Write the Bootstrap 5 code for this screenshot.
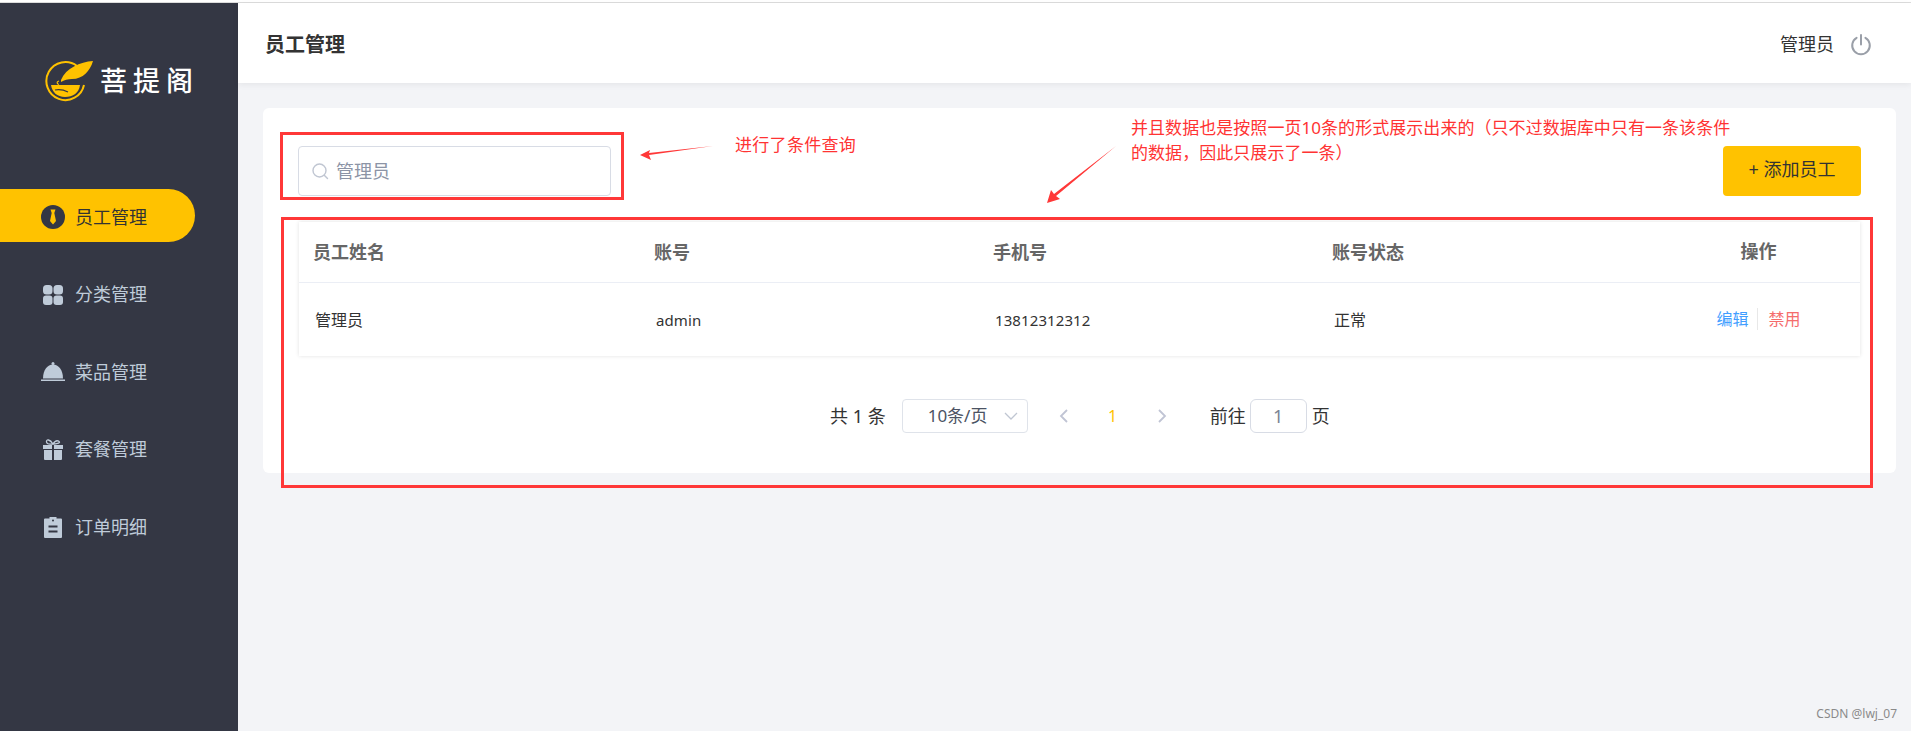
<!DOCTYPE html>
<html lang="zh-CN">
<head>
  <meta charset="UTF-8" />
  <title>员工管理</title>
  <link href="https://cdn.jsdelivr.net/npm/bootstrap@5.3.0/dist/css/bootstrap.min.css" rel="stylesheet" />
  <style>
    html, body { height: 100%; overflow: hidden; }
    body { font-family: "Noto Sans", "Noto Sans CJK SC", sans-serif; font-size: 16px; color: #333; background: #f3f4f7; }
    .page-root { position: relative; height: 731px; width: 1911px; }
    .top-line { height: 3px; background: #fff; border-bottom: 1px solid #dcdcdc; }
    .app-body { height: 728px; }

    .side-bar { width: 238px; background: #343744; color: #bfcbd9; flex-shrink: 0; }
    .logo-box { height: 186px; padding: 57px 0 0 44px; }
    .logo-text { color: #fff; font-size: 27px; font-weight: 500; letter-spacing: 6px; line-height: 42px; margin-left: 6px; }
    .menu-item { height: 53px; width: 195px; margin-bottom: 24.5px; padding: 3px 0 0 41px; font-size: 18px; gap: 10px; }
    .menu-item.is-on { background: #ffc200; color: #333; border-radius: 0 27px 27px 0; }
    .menu-item svg { width: 24px; height: 24px; flex-shrink: 0; }

    .head-bar { height: 80px; background: #fff; padding: 3px 39px 0 27px; box-shadow: 0 2px 6px rgba(0, 0, 0, .06); }
    .head-title { font-size: 20px; font-weight: 700; color: #333; }
    .head-user { font-size: 18px; color: #333; }

    .main-card { margin: 25px 15px 0 25px; height: 365px; background: #fff; border-radius: 6px; padding: 38px 35px 0 35px; }
    .search-wrap { position: relative; width: 313px; }
    .search-wrap svg { position: absolute; left: 13px; top: 16px; width: 18px; height: 18px; }
    .search-input { height: 50px; font-size: 18px; color: #8c94a6; border: 1px solid #d8dce5; border-radius: 4px; padding: 0 0 3px 37px; }
    .add-btn { width: 138px; height: 50px; background: #ffc200; color: #333; border: 0; border-radius: 4px; font-size: 18px; padding: 0 0 4px; }

    .staff-table { margin: 26px 1px 0 1px; width: 1561px; table-layout: fixed; box-shadow: 0 0 4px rgba(0, 0, 0, .12); }
    .staff-table th { height: 60px; padding: 2px 0 0 14px; color: #666; font-size: 18px; font-weight: 700; vertical-align: middle; border-bottom: 1px solid #ebeef5; }
    .staff-table td { height: 74px; padding: 2px 0 0 16px; color: #333; font-size: 16px; vertical-align: middle; border-bottom: 0; }
    .staff-table .num-cell { font-size: 15px; letter-spacing: .1px; }
    .staff-table .op-cell { padding: 0; text-align: center; }
    .op-edit { color: #419eff; padding-right: 8px; border-right: 1px solid #e8e8e8; }
    .op-ban { color: #f56c6c; padding-left: 11px; }

    .pager-row { margin-top: 43px; padding-left: 532px; font-size: 18px; color: #333; height: 34px; }
    .size-box { width: 126px; height: 34px; border: 1px solid #dfe3ea; border-radius: 4px; margin-left: 16px; padding: 0 9px 0 25px; color: #4b5363; font-size: 17px; }
    .pg-arrow { width: 12px; height: 16px; }
    .pg-prev { margin-left: 30px; }
    .pg-now { color: #ffc200; width: 36px; text-align: center; margin: 0 25px; font-size: 16px; }
    .pg-go { margin-left: 42px; }
    .go-box { width: 57px; height: 34px; border: 1px solid #d8dce5; border-radius: 6px; color: #7c8494; margin: 0 5px 0 4px; }

    .mark-layer { position: absolute; left: 0; top: 0; pointer-events: none; }
    .note-text { position: absolute; color: #ff3333; font-size: 17px; line-height: 25px; white-space: nowrap; }
    .note-one { left: 735px; top: 132px; letter-spacing: .3px; }
    .note-two { left: 1131px; top: 115px; letter-spacing: .05px; }
    .water-mark { position: absolute; right: 14px; bottom: 8px; font-size: 12px; color: #8a8a8a; }
  </style>
</head>
<body>
  <div class="page-root">
    <div class="top-line"></div>
    <div class="app-body d-flex">

      <aside class="side-bar">
        <div class="logo-box d-flex align-items-start">
          <svg width="50" height="42" viewBox="0 0 50 42">
            <path d="M33 6A19 19 0 1 0 40 25" fill="none" stroke="#ffc200" stroke-width="2"/>
            <path d="M17 20C22 8 36 2 49 1C46 11 39 19 28 19C24 19 20 20 17 22Z" fill="#ffc200"/>
            <path d="M15 21c-3 1-2 3 0 3.500" fill="none" stroke="#ffc200" stroke-width="1.200"/>
            <path d="M7 25H36C35 33 29 37 21 37C13 37 8 32 7 25Z" fill="#ffc200"/>
            <path d="M11 30c5-1 9 0 13 2" fill="none" stroke="#343744" stroke-width="1.200"/>
          </svg>
          <span class="logo-text">菩提阁</span>
        </div>
        <nav class="d-flex flex-column">
          <div class="menu-item is-on d-flex align-items-center">
            <svg viewBox="0 0 24 24"><circle cx="12" cy="12" r="12" fill="#343744"/><path d="M9.500 4.500h5l-1.200 3.500 1.700 8-3 3.500-3-3.500 1.700-8z" fill="#ffc200"/></svg>
            <span>员工管理</span>
          </div>
          <div class="menu-item d-flex align-items-center">
            <svg viewBox="0 0 24 24" fill="#bfcbd9"><rect x="2" y="2" width="9.500" height="9.500" rx="3.500"/><rect x="12.500" y="2" width="9.500" height="9.500" rx="3.500"/><rect x="2" y="12.500" width="9.500" height="9.500" rx="3"/><rect x="12.500" y="12.500" width="9.500" height="9.500" rx="3"/></svg>
            <span>分类管理</span>
          </div>
          <div class="menu-item d-flex align-items-center">
            <svg viewBox="0 0 24 24" fill="#bfcbd9"><circle cx="12" cy="3.500" r="1.500"/><path d="M2 18.500C2 10 6.500 4.500 12 4.500s10 5.500 10 14z"/><rect y="19.500" width="24" height="1.500"/></svg>
            <span>菜品管理</span>
          </div>
          <div class="menu-item d-flex align-items-center">
            <svg viewBox="0 0 24 24" fill="#bfcbd9"><path d="M2 7h9v4H2zM13 7h9v4h-9zM3 12h8v10H4a1 1 0 0 1-1-1zM13 12h8v9a1 1 0 0 1-1 1h-7z"/><path d="M12 6C9 1 5 1 5.500 4S9 6 12 6c3 0 7-1 6.500-2S15 1 12 6z" fill="none" stroke="#bfcbd9" stroke-width="1.300"/></svg>
            <span>套餐管理</span>
          </div>
          <div class="menu-item d-flex align-items-center">
            <svg viewBox="0 0 24 24"><path d="M4 3.500h4.500V2h7v1.500H20a1 1 0 0 1 1 1V22a1 1 0 0 1-1 1H4a1 1 0 0 1-1-1V4.500a1 1 0 0 1 1-1z" fill="#bfcbd9"/><circle cx="12" cy="5.500" r="1" fill="#343744"/><path d="M7.500 11.500h9M7.500 16.500h9" stroke="#343744" stroke-width="1.800"/></svg>
            <span>订单明细</span>
          </div>
        </nav>
      </aside>

      <div class="flex-grow-1">
        <header class="head-bar d-flex align-items-center justify-content-between">
          <div class="head-title">员工管理</div>
          <div class="d-flex align-items-center gap-3">
            <span class="head-user">管理员</span>
            <svg width="22" height="22" viewBox="0 0 20 20" fill="none" stroke="#9a9fa8" stroke-width="1.800" stroke-linecap="round"><path d="M6 3.500a8 8 0 1 0 8 0"/><path d="M10 1v8.500"/></svg>
          </div>
        </header>

        <section class="main-card">
          <div class="d-flex justify-content-between">
            <div class="search-wrap">
              <svg viewBox="0 0 18 18" fill="none" stroke="#c0c6d2" stroke-width="1.400" stroke-linecap="round"><circle cx="8.500" cy="8.500" r="6.500"/><path d="M13.500 13.500l3 3"/></svg>
              <input class="form-control search-input" type="text" value="管理员" />
            </div>
            <button class="btn add-btn" type="button">+ 添加员工</button>
          </div>

          <table class="table staff-table mb-0">
            <colgroup><col style="width:341px"><col style="width:339px"><col style="width:339px"><col style="width:339px"><col></colgroup>
            <thead>
              <tr><th>员工姓名</th><th>账号</th><th>手机号</th><th>账号状态</th><th class="op-cell">操作</th></tr>
            </thead>
            <tbody>
              <tr>
                <td>管理员</td><td class="num-cell">admin</td><td class="num-cell">13812312312</td><td>正常</td>
                <td class="op-cell"><span class="op-edit">编辑</span><span class="op-ban">禁用</span></td>
              </tr>
            </tbody>
          </table>

          <div class="pager-row d-flex align-items-center">
            <span>共 1 条</span>
            <div class="size-box d-flex align-items-center justify-content-between">
              <span>10条/页</span>
              <svg width="14" height="8" viewBox="0 0 14 8" fill="none" stroke="#c0c6d2" stroke-width="1.300"><path d="M1 1l6 6 6-6"/></svg>
            </div>
            <svg class="pg-arrow pg-prev" viewBox="0 0 12 16" fill="none" stroke="#c0c4d4" stroke-width="1.800"><path d="M9 2L3 8l6 6"/></svg>
            <span class="pg-now">1</span>
            <svg class="pg-arrow" viewBox="0 0 12 16" fill="none" stroke="#c0c4d4" stroke-width="1.800"><path d="M3 2l6 6-6 6"/></svg>
            <span class="pg-go">前往</span>
            <div class="go-box d-flex align-items-center justify-content-center">1</div>
            <span>页</span>
          </div>
        </section>
      </div>
    </div>

    <!-- red annotations drawn over the screenshot -->
    <svg class="mark-layer" width="1911" height="731" viewBox="0 0 1911 731" fill="none">
      <rect x="281.500" y="133.500" width="341" height="65" stroke="#ff3838" stroke-width="3"/>
      <rect x="282.500" y="218.500" width="1589" height="268" stroke="#ff3838" stroke-width="3"/>
      <path d="M713 146L649 155L651 160L640 155L650 150L649 153Z" fill="#ff3838"/>
      <path d="M1116 146L1056 196L1060 199L1047 203L1051 190L1054 194Z" fill="#ff3838"/>
    </svg>
    <div class="note-text note-one">进行了条件查询</div>
    <div class="note-text note-two">并且数据也是按照一页10条的形式展示出来的（只不过数据库中只有一条该条件<br>的数据，因此只展示了一条）</div>
    <div class="water-mark">CSDN @lwj_07</div>
  </div>
  <script src="https://cdn.jsdelivr.net/npm/bootstrap@5.3.0/dist/js/bootstrap.bundle.min.js"></script>
</body>
</html>
